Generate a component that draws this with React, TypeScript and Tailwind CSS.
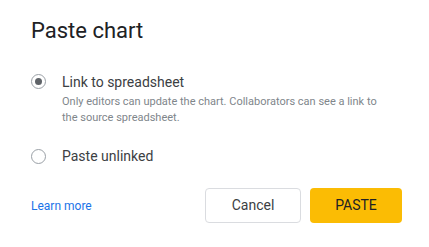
export default function App() {
  return (
    <div className="w-[429px] h-[247px] bg-white font-['Roboto',sans-serif] text-[#202124] overflow-hidden">
      <div className="pt-[17px] pl-[31px] pr-[27px]">
        <h1 className="text-[22px] leading-[28px] text-[#202124] font-['Roboto',sans-serif]">
          Paste chart
        </h1>

        <div className="mt-[28px] flex items-start">
          <span className="mt-[1px] w-[15px] h-[15px] rounded-full border border-[#9aa0a6] flex items-center justify-center shrink-0">
            <span className="w-[7px] h-[7px] rounded-full bg-[#5f6368]" />
          </span>
          <div className="ml-[16px]">
            <div className="text-[14px] leading-[18px] text-[#3c4043]">Link to spreadsheet</div>
            <p className="mt-[3px] text-[11px] leading-[16px] text-[#80868b] w-[318px]">
              Only editors can update the chart. Collaborators can see a link to the source spreadsheet.
            </p>
          </div>
        </div>

        <div className="mt-[21px] flex items-center">
          <span className="w-[15px] h-[15px] rounded-full border border-[#9aa0a6] shrink-0" />
          <div className="ml-[16px] text-[14px] leading-[18px] text-[#3c4043]">Paste unlinked</div>
        </div>

        <div className="mt-[23px] flex items-center">
          <a className="text-[12px] font-normal text-[#1a73e8]">Learn more</a>
          <div className="ml-auto flex gap-[9px]">
            <button className="w-[96px] h-[35px] rounded-[4px] border border-[#dadce0] bg-white text-[14px] text-[#3c4043] font-normal">
              Cancel
            </button>
            <button className="w-[92px] h-[35px] rounded-[4px] bg-[#fbbc04] text-[14px] text-[#202124] font-normal">
              PASTE
            </button>
          </div>
        </div>
      </div>
    </div>
  );
}
